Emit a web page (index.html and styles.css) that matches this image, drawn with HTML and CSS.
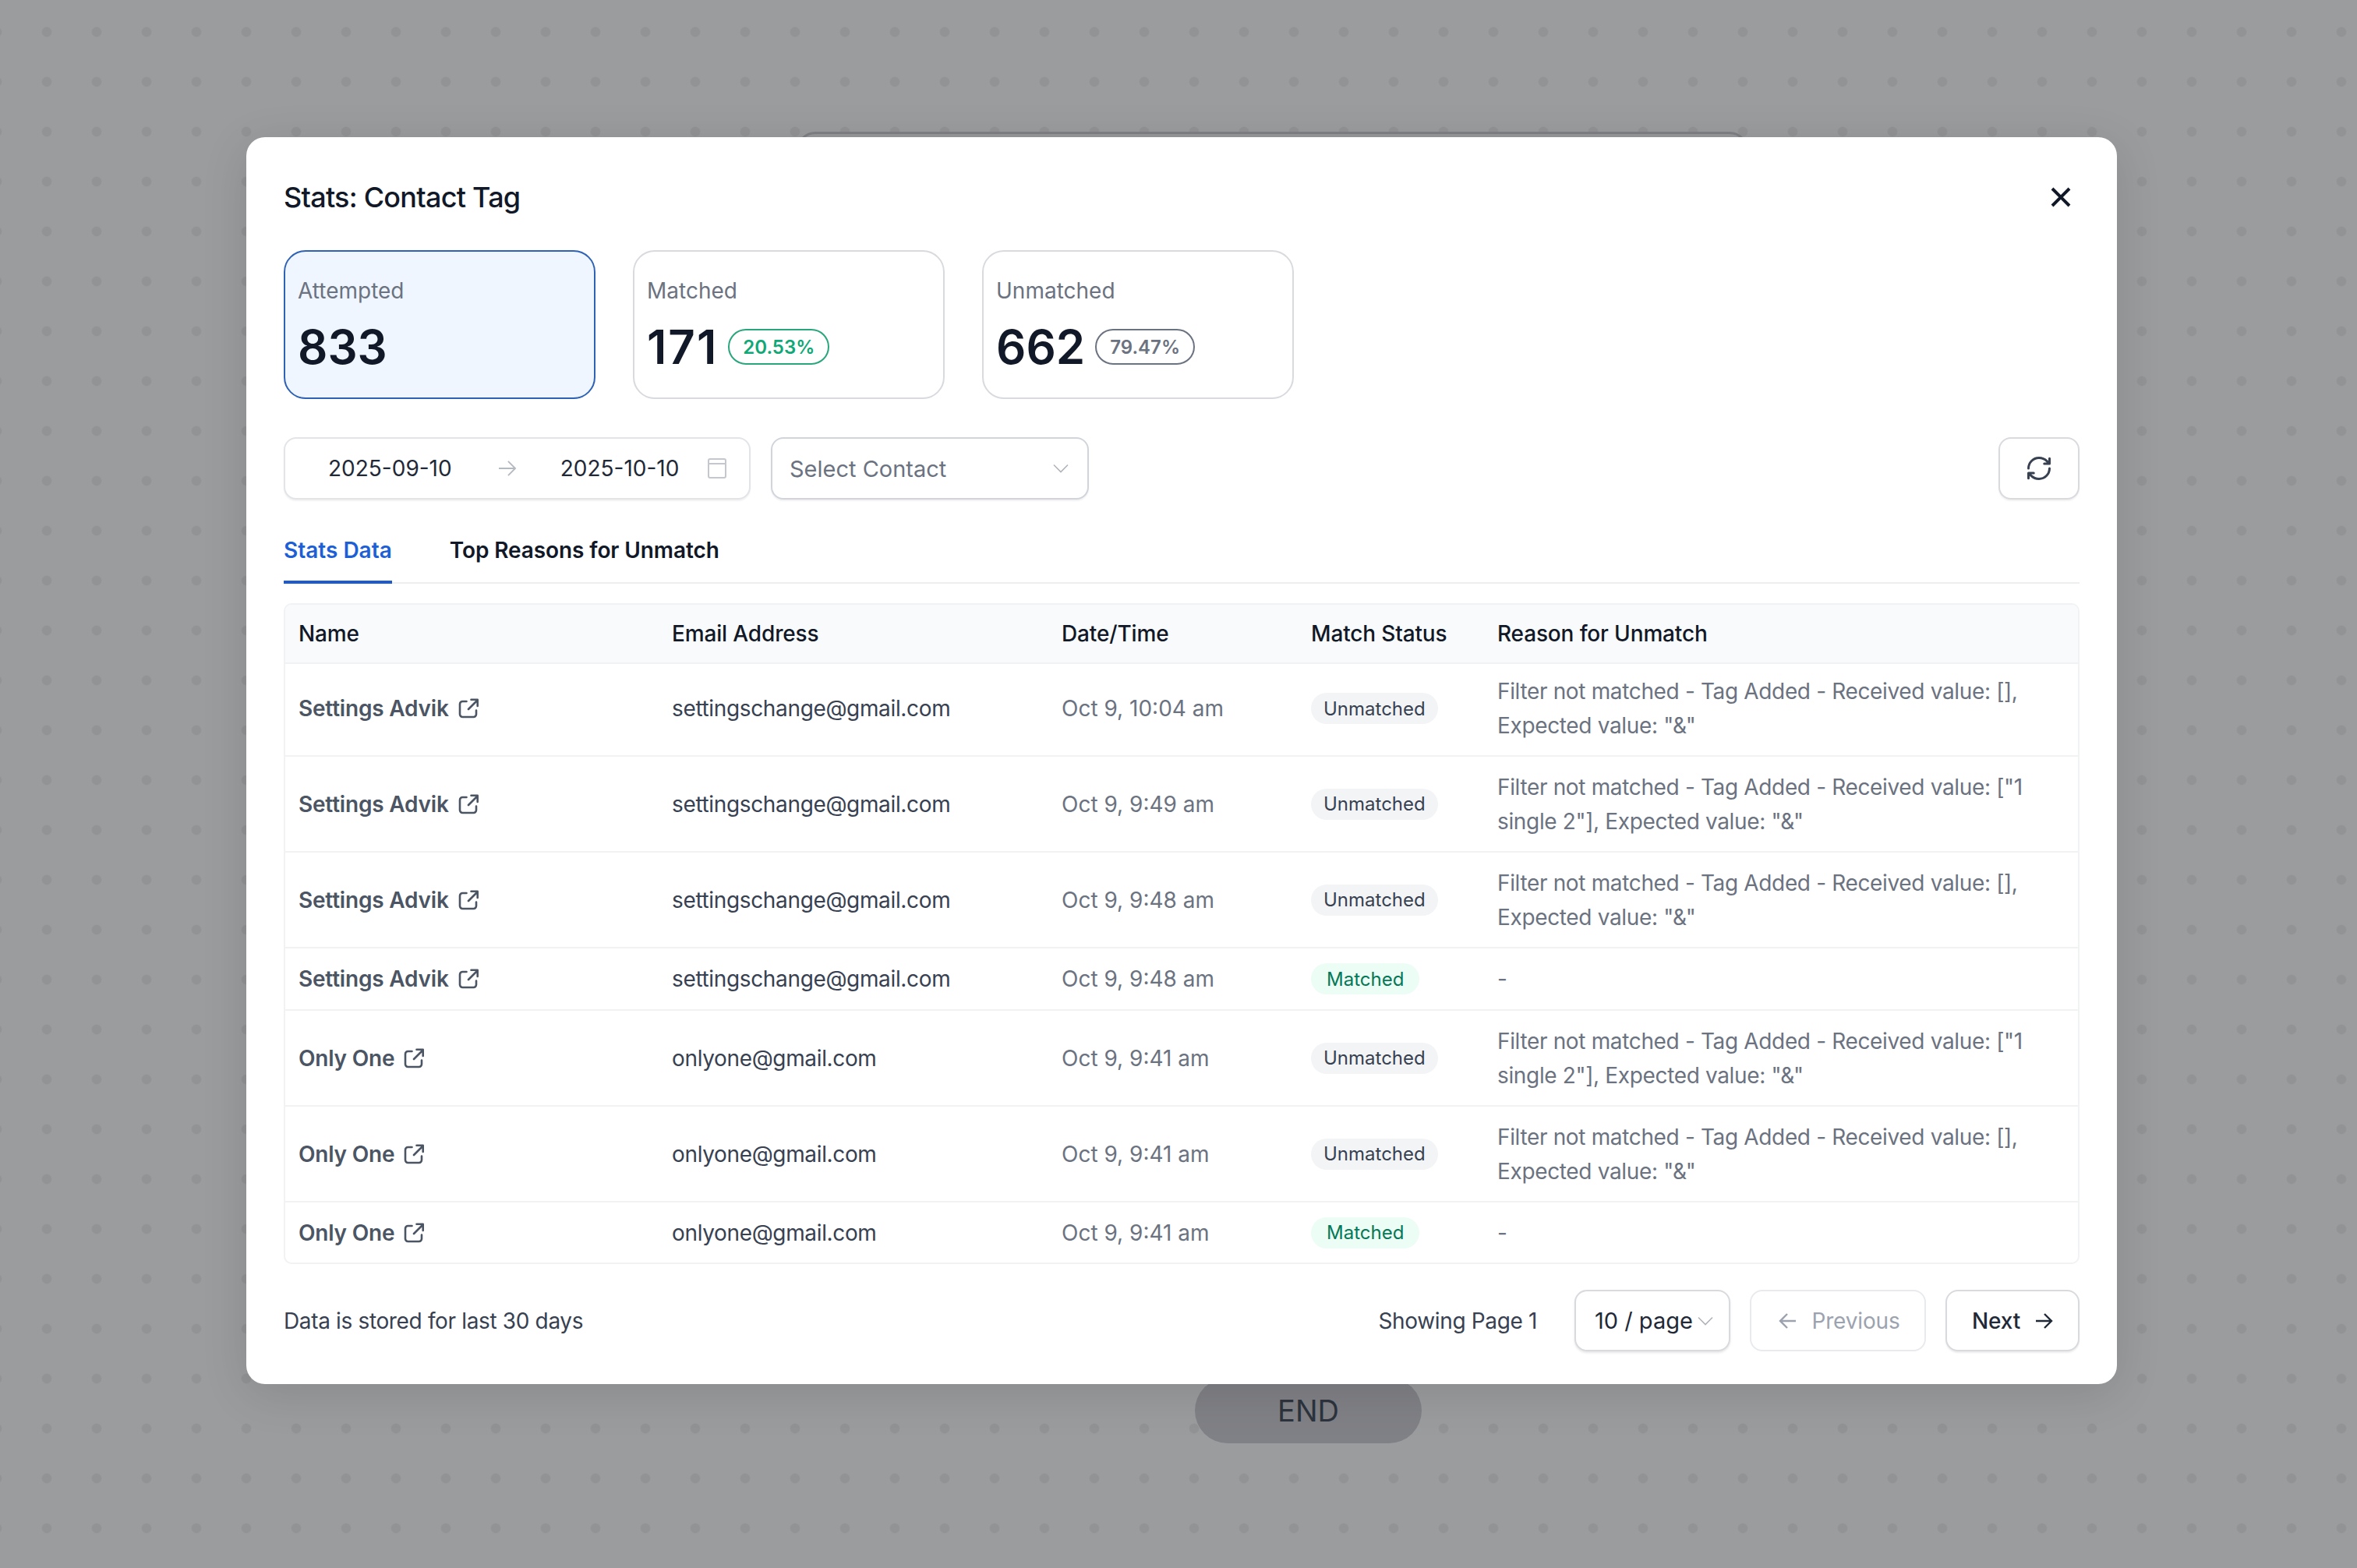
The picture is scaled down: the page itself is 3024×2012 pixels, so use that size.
FILE: index.html
```html
<!DOCTYPE html>
<html>
<head>
  <title>Stats: Contact Tag</title>
  <link rel="stylesheet" href="styles.css">
</head>
<body>

  <svg class="icon-defs">
    <symbol id="ext-link" viewBox="0 0 26 26">
      <path d="M10.5 4H5.5A3.5 3.5 0 0 0 2 7.5V20.5A3.5 3.5 0 0 0 5.5 24H19.5A3.5 3.5 0 0 0 23 20.5V15.5M13 14L24.5 2.5M16.5 1.8H24.7V10" />
    </symbol>
    <symbol id="chevron" viewBox="0 0 20 12">
      <path d="M1 1.5L10 10.5L19 1.5" />
    </symbol>
  </svg>

  <div class="canvas">
    <div class="node-back"></div>
    <div class="node-end">END</div>

    <div class="modal">
      <div class="modal-head">
        <h2 class="modal-title">Stats: Contact Tag</h2>
        <svg class="close-icon" viewBox="0 0 26 26"><path d="M2 2L24 24M24 2L2 24" /></svg>
      </div>

      <div class="cards">
        <div class="card card-active">
          <div class="card-label">Attempted</div>
          <div class="card-value"><span class="card-num">833</span></div>
        </div>
        <div class="card">
          <div class="card-label">Matched</div>
          <div class="card-value"><span class="card-num card-num-wide">171</span><span class="pct pct-green">20.53%</span></div>
        </div>
        <div class="card">
          <div class="card-label">Unmatched</div>
          <div class="card-value"><span class="card-num">662</span><span class="pct pct-grey">79.47%</span></div>
        </div>
      </div>

      <div class="filters">
        <div class="date-range">
          <span class="date-text">2025-09-10</span>
          <svg class="date-arrow" viewBox="0 0 26 24"><path d="M1 12H24M14 2L24 12L14 22" /></svg>
          <span class="date-text">2025-10-10</span>
          <svg class="date-cal" viewBox="0 0 24 26"><rect x="1" y="1" width="22" height="24" rx="2" /><path d="M1 7H23" /></svg>
        </div>
        <div class="select-contact">
          <span>Select Contact</span>
          <svg class="chevron"><use href="#chevron" /></svg>
        </div>
        <button class="refresh-btn">
          <svg class="refresh-icon" viewBox="0 0 24 24">
            <path d="M3 12a9 9 0 0 1 9-9 9.75 9.75 0 0 1 6.74 2.74L21 8M21 3.5V8H16.5" />
            <path d="M21 12a9 9 0 0 1-9 9 9.75 9.75 0 0 1-6.74-2.74L3 16M7.5 16H3V20.5" />
          </svg>
        </button>
      </div>

      <div class="tabs">
        <div class="tab tab-active">Stats Data</div>
        <div class="tab">Top Reasons for Unmatch</div>
      </div>

      <div class="table-wrap">
        <table class="stats-table">
          <colgroup>
            <col class="col-name"><col class="col-email"><col class="col-date"><col class="col-status"><col class="col-reason">
          </colgroup>
          <thead>
            <tr>
              <th>Name</th>
              <th>Email Address</th>
              <th>Date/Time</th>
              <th>Match Status</th>
              <th>Reason for Unmatch</th>
            </tr>
          </thead>
          <tbody>
            <tr class="row-first">
              <td><span class="name">Settings Advik<svg class="ext-icon"><use href="#ext-link" /></svg></span></td>
              <td class="email">settingschange@gmail.com</td>
              <td class="date">Oct 9, 10:04 am</td>
              <td><span class="chip chip-grey">Unmatched</span></td>
              <td class="reason">Filter not matched - Tag Added - Received value: [], Expected value: "&amp;"</td>
            </tr>
            <tr class="row-tall">
              <td><span class="name">Settings Advik<svg class="ext-icon"><use href="#ext-link" /></svg></span></td>
              <td class="email">settingschange@gmail.com</td>
              <td class="date">Oct 9, 9:49 am</td>
              <td><span class="chip chip-grey">Unmatched</span></td>
              <td class="reason">Filter not matched - Tag Added - Received value: ["1 single 2"], Expected value: "&amp;"</td>
            </tr>
            <tr class="row-tall">
              <td><span class="name">Settings Advik<svg class="ext-icon"><use href="#ext-link" /></svg></span></td>
              <td class="email">settingschange@gmail.com</td>
              <td class="date">Oct 9, 9:48 am</td>
              <td><span class="chip chip-grey">Unmatched</span></td>
              <td class="reason">Filter not matched - Tag Added - Received value: [], Expected value: "&amp;"</td>
            </tr>
            <tr class="row-mid">
              <td><span class="name">Settings Advik<svg class="ext-icon"><use href="#ext-link" /></svg></span></td>
              <td class="email">settingschange@gmail.com</td>
              <td class="date">Oct 9, 9:48 am</td>
              <td><span class="chip chip-green">Matched</span></td>
              <td class="reason">-</td>
            </tr>
            <tr class="row-tall">
              <td><span class="name">Only One<svg class="ext-icon"><use href="#ext-link" /></svg></span></td>
              <td class="email">onlyone@gmail.com</td>
              <td class="date">Oct 9, 9:41 am</td>
              <td><span class="chip chip-grey">Unmatched</span></td>
              <td class="reason">Filter not matched - Tag Added - Received value: ["1 single 2"], Expected value: "&amp;"</td>
            </tr>
            <tr class="row-tall">
              <td><span class="name">Only One<svg class="ext-icon"><use href="#ext-link" /></svg></span></td>
              <td class="email">onlyone@gmail.com</td>
              <td class="date">Oct 9, 9:41 am</td>
              <td><span class="chip chip-grey">Unmatched</span></td>
              <td class="reason">Filter not matched - Tag Added - Received value: [], Expected value: "&amp;"</td>
            </tr>
            <tr class="row-short">
              <td><span class="name">Only One<svg class="ext-icon"><use href="#ext-link" /></svg></span></td>
              <td class="email">onlyone@gmail.com</td>
              <td class="date">Oct 9, 9:41 am</td>
              <td><span class="chip chip-green">Matched</span></td>
              <td class="reason">-</td>
            </tr>
          </tbody>
        </table>
      </div>

      <div class="footer">
        <div class="footer-note">Data is stored for last 30 days</div>
        <div class="pager">
          <span class="pager-text">Showing Page 1</span>
          <div class="page-size">
            <span>10 / page</span>
            <svg class="chevron"><use href="#chevron" /></svg>
          </div>
          <button class="page-btn page-btn-off">
            <svg class="page-arrow" viewBox="0 0 24 24"><path d="M22 12H2M11 3L2 12L11 21" /></svg>
            Previous
          </button>
          <button class="page-btn page-btn-next">
            Next
            <svg class="page-arrow" viewBox="0 0 24 24"><path d="M2 12H22M13 3L22 12L13 21" /></svg>
          </button>
        </div>
      </div>
    </div>
  </div>

</body>
</html>
```

FILE: styles.css
```css
* {
  box-sizing: border-box;
}

body {
  margin: 0;
  font-family: Inter, "Noto Sans", sans-serif;
  font-size: 28px;
  color: #374151;
}

.icon-defs {
  position: absolute;
  width: 0;
  height: 0;
}

.canvas {
  position: relative;
  width: 3024px;
  height: 2012px;
  overflow: hidden;
  padding: 176px 0 0 316px;
  background-color: #9b9c9e;
  background-image: radial-gradient(circle at 32px 32px, #929395 5.5px, transparent 7px);
  background-size: 64px 64px;
  background-position: 28px 9px;
}

/* flow nodes sitting behind the modal */
.node-back {
  position: absolute;
  left: 1022px;
  top: 169px;
  width: 1221px;
  height: 120px;
  border: 3px solid #7f8084;
  border-radius: 24px;
  background: #97989a;
}

.node-end {
  position: absolute;
  left: 1533px;
  top: 1768px;
  width: 291px;
  height: 84px;
  display: flex;
  align-items: center;
  justify-content: center;
  border-radius: 42px;
  background: #808186;
  color: #2d333d;
  font-size: 38px;
}

.modal {
  position: relative;
  width: 2400px;
  height: 1600px;
  padding: 49px 48px 0;
  background: #ffffff;
  border-radius: 24px;
  box-shadow: 0 12px 60px rgba(0, 0, 0, 0.12);
}

.modal-head {
  display: flex;
  justify-content: space-between;
  align-items: center;
  height: 56px;
  margin-bottom: 40px;
}

.modal-title {
  margin: 0;
  font-size: 36px;
  font-weight: 500;
  letter-spacing: -0.75px;
  color: #111827;
}

.close-icon {
  width: 26px;
  height: 26px;
  margin-right: 11px;
  fill: none;
  stroke: #111827;
  stroke-width: 4;
}

.cards {
  display: flex;
  gap: 48px;
  margin-bottom: 49px;
}

.card {
  width: 400px;
  height: 191px;
  padding: 30px 16px 0;
  border: 2px solid #d8dade;
  border-radius: 28px;
  background: #ffffff;
}

.card-active {
  background: #eff6ff;
  border-color: #2f62b5;
}

.card-label {
  color: #6b7280;
  line-height: 40px;
}

.card-value {
  display: flex;
  align-items: center;
  gap: 13px;
  margin-top: 20px;
  height: 64px;
}

.card-num {
  font-size: 60px;
  font-weight: 600;
  color: #111827;
}

.card-num-wide {
  letter-spacing: 2px;
}

.pct {
  display: flex;
  align-items: center;
  height: 46px;
  padding: 0 17px;
  border: 2px solid;
  border-radius: 23px;
  font-size: 24px;
  font-weight: 600;
}

.pct-green {
  color: #10a876;
  border-color: #2aa67c;
}

.pct-grey {
  color: #6b7280;
  border-color: #6b7280;
}

.filters {
  display: flex;
  align-items: center;
  height: 80px;
}

.date-range,
.select-contact,
.refresh-btn {
  height: 80px;
  background: #ffffff;
  border: 2px solid #e2e4e8;
  border-radius: 16px;
  box-shadow: 0 2px 2px rgba(0, 0, 0, 0.06);
}

.date-range {
  display: flex;
  align-items: center;
  width: 599px;
  padding-left: 55px;
  margin-right: 26px;
  color: #1f2937;
}

.date-arrow {
  width: 24px;
  height: 22px;
  margin: 0 56px 0 59px;
  fill: none;
  stroke: #b5b9c0;
  stroke-width: 2;
}

.date-cal {
  width: 24px;
  height: 26px;
  margin-left: 37px;
  fill: none;
  stroke: #c4c7cc;
  stroke-width: 2;
}

.select-contact {
  display: flex;
  align-items: center;
  justify-content: space-between;
  width: 408px;
  padding: 0 24px 0 22px;
  border-color: #d1d5db;
  color: #6b7280;
  font-size: 29px;
}

.chevron {
  width: 20px;
  height: 12px;
  fill: none;
  stroke: #b0b4ba;
  stroke-width: 1.6;
}

.refresh-btn {
  display: flex;
  align-items: center;
  justify-content: center;
  width: 104px;
  margin-left: auto;
  padding: 0;
  border-color: #d8dade;
}

.refresh-icon {
  width: 36px;
  height: 36px;
  fill: none;
  stroke: #374151;
  stroke-width: 2;
  stroke-linecap: round;
  stroke-linejoin: round;
}

.tabs {
  display: flex;
  gap: 74px;
  height: 108px;
  border-bottom: 2px solid #eceef0;
}

.tab {
  height: 106px;
  padding-top: 43px;
  line-height: 44px;
  font-weight: 600;
  letter-spacing: -0.1px;
  color: #111827;
}

.tab-active {
  height: 108px;
  letter-spacing: 0;
  color: #1d5fd6;
  border-bottom: 4px solid #1d5ad0;
}

.table-wrap {
  margin-top: 25px;
  border: 2px solid #f1f2f4;
  border-radius: 10px;
  overflow: hidden;
}

.stats-table {
  width: 100%;
  table-layout: fixed;
  border-collapse: separate;
  border-spacing: 0;
}

.col-name { width: 479px; }
.col-email { width: 500px; }
.col-date { width: 320px; }
.col-status { width: 239px; }

.stats-table th,
.stats-table td {
  padding: 0 17px;
  text-align: left;
  border-bottom: 2px solid #f1f2f4;
}

.stats-table th {
  height: 76px;
  background: #f9fafb;
  font-weight: 500;
  letter-spacing: -0.15px;
  color: #111827;
}

.stats-table tbody tr:last-child td {
  border-bottom: none;
}

.stats-table .row-first td {
  height: 119px;
  padding-bottom: 3px;
}

.row-tall td { height: 123px; }
.row-mid td { height: 80px; }
.row-short td { height: 77px; }

.name {
  display: inline-flex;
  align-items: center;
  gap: 12px;
  font-weight: 600;
  letter-spacing: -0.2px;
  color: #4b5563;
}

.ext-icon {
  width: 26px;
  height: 26px;
  fill: none;
  stroke: #4b5563;
  stroke-width: 2.6;
  stroke-linecap: round;
  stroke-linejoin: round;
}

.email {
  color: #374151;
  letter-spacing: -0.35px;
}

.date {
  color: #6b7280;
}

.reason {
  color: #6b7280;
  line-height: 44px;
  letter-spacing: -0.35px;
}

.chip {
  display: inline-flex;
  align-items: center;
  height: 40px;
  padding: 0 16px;
  border-radius: 20px;
  font-size: 24px;
}

.chip-grey {
  background: #f3f4f6;
  color: #374151;
}

.chip-green {
  padding: 0 20px;
  background: #ecfdf5;
  color: #047857;
}

.footer {
  display: flex;
  justify-content: space-between;
  align-items: center;
  margin-top: 33px;
  letter-spacing: -0.35px;
}

.pager {
  display: flex;
  align-items: center;
}

.pager-text {
  margin-right: 48px;
}

.page-size,
.page-btn {
  display: flex;
  align-items: center;
  height: 79px;
  background: #ffffff;
  border: 2px solid #d8dade;
  border-radius: 16px;
}

.page-size {
  width: 200px;
  padding: 0 20px 0 24px;
  justify-content: space-between;
  margin-right: 25px;
  font-size: 29px;
  letter-spacing: 0;
  white-space: nowrap;
  color: #1f2937;
  box-shadow: 0 2px 3px rgba(0, 0, 0, 0.1);
}

.page-btn {
  justify-content: center;
  gap: 18px;
  font-family: inherit;
  font-size: 28px;
}

.page-btn-off {
  width: 226px;
  margin-right: 25px;
  padding-left: 10px;
  border-color: #e8eaed;
  color: #9ca3af;
  letter-spacing: -0.15px;
}

.page-btn-next {
  width: 172px;
  color: #1f2937;
  font-weight: 500;
  letter-spacing: -0.15px;
  box-shadow: 0 2px 2px rgba(0, 0, 0, 0.08);
}

.page-arrow {
  width: 24px;
  height: 24px;
  fill: none;
  stroke: currentColor;
  stroke-width: 2.4;
}
```
